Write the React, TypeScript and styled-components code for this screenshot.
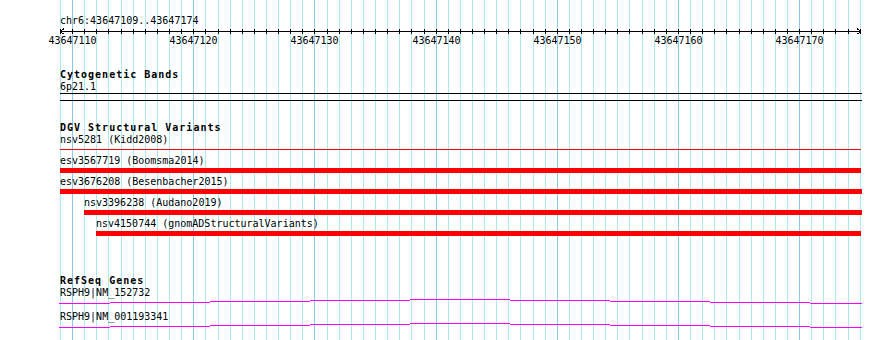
import * as React from 'react';
import styled, { createGlobalStyle } from 'styled-components';

const VIEW_LEFT = 60;
const VIEW_WIDTH = 802;
const PX_PER_BP = 12.1167;
const FIRST_BP = 43647109;
const BP_COUNT = 66;

const GlobalStyle = createGlobalStyle`
  html, body {
    margin: 0;
    padding: 0;
    background: #fff;
  }
  body {
    font-family: 'DejaVu Sans Mono', 'Liberation Mono', monospace;
    font-size: 10px;
    color: #000;
  }
`;

const Page = styled.div`
  position: relative;
  width: 890px;
  height: 340px;
  overflow: hidden;
  background: #fff;
`;

const GridLayer = styled.svg`
  position: absolute;
  top: 0;
  left: 0;
  width: 890px;
  height: 340px;
  shape-rendering: crispEdges;
`;

const Content = styled.div`
  position: relative;
  padding: 15px 0 0 ${VIEW_LEFT}px;
  width: ${VIEW_WIDTH}px;
`;

const LocationLabel = styled.div`
  line-height: 12px;
  height: 12px;
  white-space: pre;
`;

const ScaleAxis = styled.svg`
  display: block;
  width: ${VIEW_WIDTH}px;
  height: 7px;
  shape-rendering: crispEdges;
`;

const ScaleLabels = styled.div`
  position: relative;
  height: 12px;
  margin-top: 1px;
`;

const ScaleLabel = styled.span`
  position: absolute;
  top: 0;
  line-height: 12px;
  transform: translateX(-50%);
  white-space: pre;
`;

const Track = styled.section<{ $gap: number }>`
  display: flow-root;
  margin-top: ${p => p.$gap}px;
`;

const TrackTitle = styled.h3`
  margin: 0;
  font-size: 10px;
  font-weight: bold;
  letter-spacing: 1px;
  line-height: 12px;
`;

const ItemLabel = styled.div`
  line-height: 12px;
  height: 12px;
  white-space: pre;
`;

const Band = styled.div`
  width: ${VIEW_WIDTH}px;
  height: 6px;
  border-top: 1px solid #000;
  border-bottom: 1px solid #000;
`;

const FeatureRow = styled.div<{ $start: number }>`
  display: flow-root;
  margin-left: ${p => p.$start}px;
`;

const Bar = styled.div<{ $thin?: boolean; $width: number }>`
  width: ${p => p.$width}px;
  height: ${p => (p.$thin ? 1 : 5)}px;
  margin: ${p => (p.$thin ? '3px 0 5px' : '1px 0 3px')};
  background: #f00;
`;

const GeneRow = styled.div`
  display: flow-root;
  padding-bottom: 7px;
`;

const GeneLine = styled.svg`
  display: block;
  width: 803px;
  height: 5px;
  margin-left: -1px;
  shape-rendering: crispEdges;
`;

const lineX = (k: number) => Math.round(VIEW_LEFT + k * PX_PER_BP);
const positions = Array.from({ length: BP_COUNT + 1 }, (_, k) => k);
const isMajor = (k: number) => (FIRST_BP + k) % 10 === 0;

const features = [
  { name: 'nsv5281 (Kidd2008)', start: 0, end: 801, thin: true },
  { name: 'esv3567719 (Boomsma2014)', start: 0, end: 801 },
  { name: 'esv3676208 (Besenbacher2015)', start: 0, end: 802 },
  { name: 'nsv3396238 (Audano2019)', start: 24, end: 802 },
  { name: 'nsv4150744 (gnomADStructuralVariants)', start: 36, end: 801 },
];

const genes = ['RSPH9|NM_152732', 'RSPH9|NM_001193341'];

// stepped intron line, page x from 59 to 862
const geneSteps: Array<[number, number, number]> = [
  [59, 110, 4],
  [110, 210, 3],
  [210, 310, 2],
  [310, 410, 1],
  [410, 510, 0],
  [510, 610, 1],
  [610, 710, 2],
  [710, 810, 3],
  [810, 862, 4],
];

const Grid = () => (
  <GridLayer viewBox="0 0 890 340">
    {positions.map(k => (
      <rect
        key={k}
        x={lineX(k)}
        y={0}
        width={1}
        height={340}
        fill={isMajor(k) ? 'rgb(136,200,232)' : 'rgb(170,234,238)'}
      />
    ))}
  </GridLayer>
);

const Ruler = () => (
  <>
    <LocationLabel>chr6:43647109..43647174</LocationLabel>
    <ScaleAxis viewBox={`0 0 ${VIEW_WIDTH} 7`}>
      <rect x={0} y={4} width={801} height={1} fill="#000" />
      {positions.map(k => (
        <rect key={k} x={lineX(k) - VIEW_LEFT} y={2} width={1} height={5} fill="#000" />
      ))}
      <polyline points="4,1.5 0.5,4.5 4,7.5" fill="none" stroke="#000" strokeWidth={1} />
      <polyline points="797,1.5 800.5,4.5 797,7.5" fill="none" stroke="#000" strokeWidth={1} />
    </ScaleAxis>
    <ScaleLabels>
      {positions.filter(isMajor).map(k => (
        <ScaleLabel key={k} style={{ left: lineX(k) - VIEW_LEFT + 0.5 }}>
          {FIRST_BP + k}
        </ScaleLabel>
      ))}
    </ScaleLabels>
  </>
);

export default function App() {
  return (
    <Page>
      <GlobalStyle />
      <Grid />
      <Content>
        <Ruler />

        <Track $gap={22}>
          <TrackTitle>Cytogenetic Bands</TrackTitle>
          <ItemLabel>6p21.1</ItemLabel>
          <Band />
        </Track>

        <Track $gap={21}>
          <TrackTitle>DGV Structural Variants</TrackTitle>
          {features.map(f => (
            <FeatureRow key={f.name} $start={f.start}>
              <ItemLabel>{f.name}</ItemLabel>
              <Bar $thin={f.thin} $width={f.end - f.start} />
            </FeatureRow>
          ))}
        </Track>

        <Track $gap={36}>
          <TrackTitle>RefSeq Genes</TrackTitle>
          {genes.map(g => (
            <GeneRow key={g}>
              <ItemLabel>{g}</ItemLabel>
              <GeneLine viewBox="0 0 803 5">
                {geneSteps.map(([x1, x2, y]) => (
                  <rect key={x1} x={x1 - 59} y={y} width={x2 - x1} height={1} fill="#f0f" />
                ))}
              </GeneLine>
            </GeneRow>
          ))}
        </Track>
      </Content>
    </Page>
  );
}
